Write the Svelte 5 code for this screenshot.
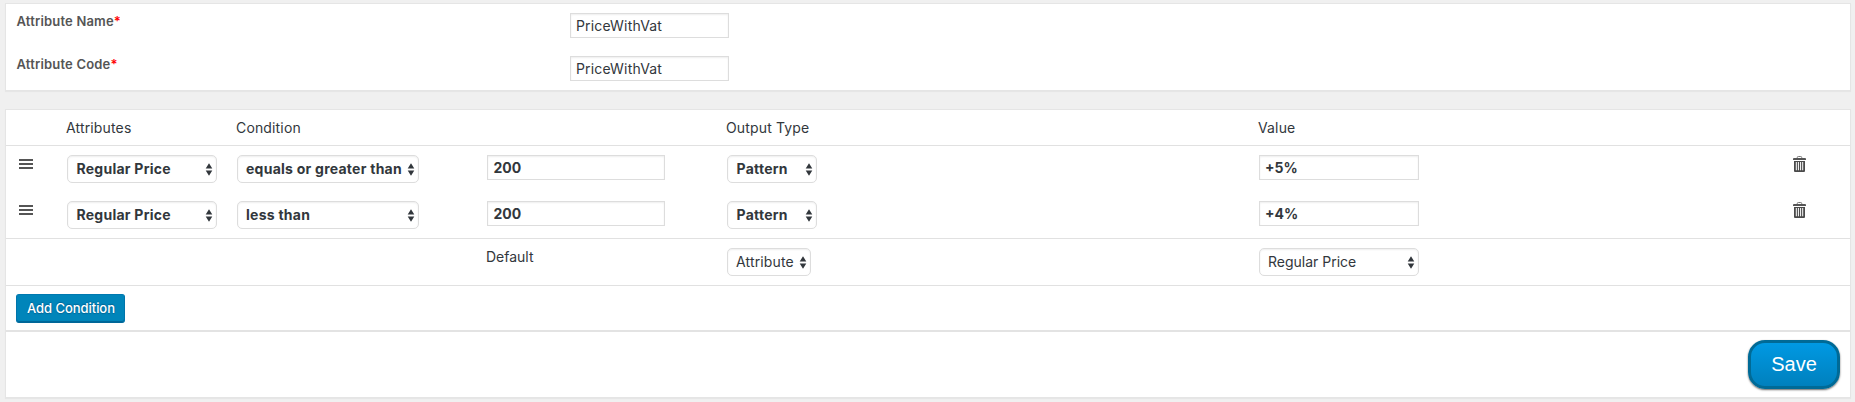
<script>
  const fields = [
    { label: 'Attribute Name', value: 'PriceWithVat' },
    { label: 'Attribute Code', value: 'PriceWithVat' }
  ];
  const rules = [
    { condition: 'equals or greater than', amount: '200', value: '+5%' },
    { condition: 'less than', amount: '200', value: '+4%' }
  ];
</script>

{#snippet select(text, size)}
  <div class="select {size}">
    <span>{text}</span>
    <svg width="8" height="13" viewBox="0 0 8 13"><path d="M0.7 5.6 4 0.3 7.3 5.6ZM0.7 7.4h6.6L4 12.7Z" fill="#32373c" /></svg>
  </div>
{/snippet}

<main>
  <section class="panel details">
    {#each fields as f}
      <div class="field">
        <div class="label">{f.label}<i>*</i></div>
        <div class="input">{f.value}</div>
      </div>
    {/each}
  </section>

  <section class="panel rules">
    <div class="grid head">
      <span></span><span>Attributes</span><span>Condition</span><span></span><span>Output Type</span><span>Value</span>
    </div>
    <div class="body">
      {#each rules as r}
        <div class="grid row">
          <svg class="handle" width="14" height="11" viewBox="0 0 14 11"><path d="M0 0h14v2H0zM0 4h14v2H0zM0 8h14v2H0z" fill="#555" /></svg>
          {@render select('Regular Price', 'attr')}
          {@render select(r.condition, 'cond')}
          <div class="input amount">{r.amount}</div>
          {@render select('Pattern', 'type')}
          <div class="input value">{r.value}</div>
          <svg class="trash" width="13" height="16" viewBox="0 0 13 16">
            <path d="M4.3 2.2V1.4Q4.3.5 5.3.5h2.4q1 0 1 .9v.8" fill="none" stroke="#777" />
            <path d="M0 4V3q0-1 1-1h11q1 0 1 1v1z" fill="#555" />
            <path fill-rule="evenodd" d="M1 5h11v10q0 1-1 1H2q-1 0-1-1zM2.8 6v8.2h1V6zM4.9 6v8.2h1V6zM7.1 6v8.2h1V6zM9.2 6v8.2h1V6z" fill="#4a4a4a" />
          </svg>
        </div>
      {/each}
    </div>
    <div class="grid fallback">
      <span></span><span></span><span></span>
      <span class="default">Default</span>
      {@render select('Attribute', 'short')}
      {@render select('Regular Price', 'value')}
    </div>
    <div class="add"><button class="primary">Add Condition</button></div>
    <div class="footer"><button class="save">Save</button></div>
  </section>
</main>

<style>
  :global(body) { background: #f0f0f0; }
  main {
    box-sizing: border-box;
    height: 402px;
    padding: 3px 4px 0 5px;
    display: flex;
    flex-direction: column;
    gap: 18px;
    font: 14px/20px Inter, "Liberation Sans", sans-serif;
    color: #32373c;
    overflow: hidden;
  }
  .panel, .input, .select, button { box-sizing: border-box; }
  .panel { background: #fff; border: 1px solid #e5e5e5; box-shadow: 0 1px 1px rgba(0, 0, 0, .04); }
  .details { height: 88px; padding-top: 9px; display: flex; flex-direction: column; gap: 18px; }
  .field { display: grid; grid-template-columns: 553.5px auto; justify-content: start; padding-left: 10.5px; height: 25px; }
  .label { font-size: 13px; font-weight: 600; line-height: 17px; letter-spacing: .18px; color: #555; }
  .label i { color: #f00; font-style: normal; }
  .input {
    width: 159px;
    height: 25px;
    padding-left: 5px;
    border: 1px solid #ddd;
    box-shadow: inset 0 1px 2px rgba(0, 0, 0, .07);
    line-height: 24px;
    letter-spacing: .17px;
  }
  .rules { height: 289px; }
  .grid { display: grid; grid-template-columns: 60px 170px 250px 240px 532px 535px auto; justify-content: start; align-items: start; }
  .head { height: 36px; padding-top: 8px; box-sizing: border-box; border-bottom: 1px solid #e1e1e1; letter-spacing: .15px; }
  .body { height: 93px; box-sizing: border-box; padding-top: 9px; border-bottom: 1px solid #e1e1e1; }
  .row { height: 46px; font-weight: 700; }
  .row .select { letter-spacing: .25px; }
  .row .attr, .row .type { padding-left: 8.5px; }
  .row .input { padding-left: 5.5px; letter-spacing: 0; }
  .row .input.value { padding-left: 5px; }
  .handle { margin: 4px 0 0 13px; }
  .trash { margin-top: 1px; }
  .select {
    height: 28px;
    margin-left: 1px;
    padding: 0 3px 0 8px;
    display: flex;
    align-items: center;
    justify-content: space-between;
    border: 1px solid #ddd;
    border-radius: 5px;
    box-shadow: inset 0 1px 2px rgba(0, 0, 0, .07);
    white-space: nowrap;
  }
  .attr { width: 150px; }
  .cond { width: 182px; }
  .type { width: 90px; }
  .short { width: 84px; letter-spacing: .15px; }
  .amount { width: 178px; margin-left: 1px; }
  .value { width: 160px; margin-left: 1px; }
  .fallback { height: 47px; box-sizing: border-box; padding-top: 9px; border-bottom: 1px solid #e1e1e1; }
  .default { margin-top: -1px; }
  .add { height: 46px; box-sizing: border-box; padding: 8px 0 0 10px; border-bottom: 2px solid #e3e3e3; }
  button { display: block; font-family: inherit; color: #fff; padding: 0; }
  .primary {
    width: 109px;
    height: 29px;
    border: 1px solid #0073aa;
    border-color: #0079b0 #0075ab #006799;
    border-radius: 3px;
    background: #0085ba;
    box-shadow: inset 0 -1px 0 #006799;
    font-size: 13px;
    font-weight: 500;
    letter-spacing: -.05px;
    line-height: 25px;
    padding: 0 0 0 1px;
    text-shadow: 0 -1px 1px #006799, 0 1px 1px #006799;
  }
  .footer { display: flex; justify-content: flex-end; padding: 8px 10px 0 0; }
  .save {
    width: 92px;
    height: 49px;
    border: 3px solid #006a96;
    border-radius: 17px;
    background: linear-gradient(#0099e3, #0080bd);
    box-shadow: 0 1px 2px rgba(0, 0, 0, .6);
    padding-bottom: 2px;
    font: 20px/40px "Liberation Sans", Arial, sans-serif;
  }
</style>
